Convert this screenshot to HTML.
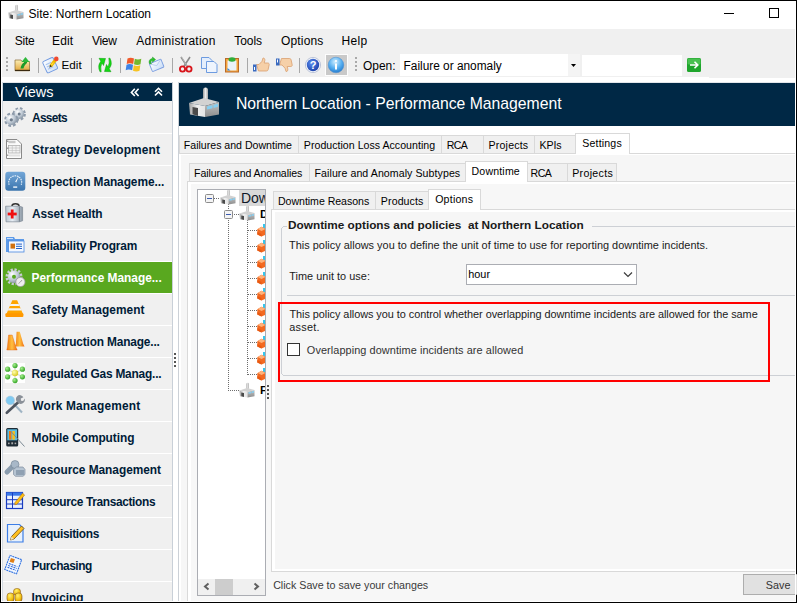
<!DOCTYPE html>
<html><head><meta charset="utf-8">
<style>
*{margin:0;padding:0;box-sizing:border-box}
html,body{width:797px;height:603px;overflow:hidden;background:#000}
body{position:relative;font-family:"Liberation Sans",sans-serif;color:#000}
.a{position:absolute}
.t{position:absolute;white-space:pre;line-height:1}
svg{position:absolute;overflow:visible}
</style></head><body>
<svg width="0" height="0" style="position:absolute;left:0;top:0">
<defs>
<linearGradient id="gch" x1="0" x2="1" y1="0" y2="0"><stop offset="0" stop-color="#9a9a9a"/><stop offset=".5" stop-color="#ececec"/><stop offset="1" stop-color="#a8a8a8"/></linearGradient>
<linearGradient id="glf" x1="0" x2="1" y1="0" y2="0"><stop offset="0" stop-color="#a4a4a4"/><stop offset=".5" stop-color="#eeeeee"/><stop offset="1" stop-color="#e4e4e4"/></linearGradient>
<linearGradient id="grf" x1="0" x2="0" y1="0" y2="1"><stop offset="0" stop-color="#c2c2c2"/><stop offset="1" stop-color="#8e8e8e"/></linearGradient>
<symbol id="fac" viewBox="0 0 32 32">
<rect x="15" y="1.5" width="5" height="13" rx="2.5" fill="url(#gch)"/>
<polygon points="1,17 16,12 31,16 17,20" fill="#d2d2d2"/>
<polygon points="1,17 17,20 17,31 2,28.5" fill="url(#glf)"/>
<polygon points="17,20 31,16 31,28.5 17,31" fill="url(#grf)"/>
<polygon points="4.5,21 10,22 10,30 4.5,28.3" fill="#4a4a4a"/>
<polygon points="19,20.5 24.5,19.3 24.5,22.3 19,23.5" fill="#86cff2"/>
<polygon points="25.5,19 30,17.8 30,20.8 25.5,22" fill="#86cff2"/>
</symbol>
<symbol id="cube" viewBox="0 0 16 16">
<rect x="12" y="0" width="3" height="6" fill="#2ec8f0"/>
<polygon points="8,2.5 14,5.5 14,11.5 8,14.5 2,11.5 2,5.5" fill="#f46a1f"/>
<polygon points="8,2.5 14,5.5 8,8.5 2,5.5" fill="#ffa66a"/>
<polygon points="8,8.5 14,5.5 14,11.5 8,14.5" fill="#e5581a"/>
</symbol>
<pattern id="dotv" width="1" height="2" patternUnits="userSpaceOnUse"><rect width="1" height="1" fill="#6d6d6d"/></pattern>
<pattern id="doth" width="2" height="1" patternUnits="userSpaceOnUse"><rect width="1" height="1" fill="#6d6d6d"/></pattern>
</defs></svg>

<div class="a" style="left:1px;top:1px;width:795px;height:601px;background:#fff;"></div>
<svg style="left:8px;top:4px" width="16" height="16"><use href="#fac" x="0" y="0" width="16" height="16"/></svg>

<div class="t" style="left:28.52px;top:8px;font-size:12.00px;letter-spacing:-0.011px;">Site: Northern Location</div>
<div class="a" style="left:724px;top:13px;width:10px;height:1px;background:#000;"></div>
<div class="a" style="left:769px;top:8px;width:10px;height:10px;border:1px solid #000"></div>
<div class="a" style="left:2px;top:29px;width:793px;height:48px;background:#f0f0f0;"></div>
<div class="a" style="left:709px;top:77px;width:86px;height:1px;background:#f0f0f0;"></div>
<div class="t" style="left:14.82px;top:35px;font-size:12.00px;letter-spacing:-0.293px;">Site</div>
<div class="t" style="left:52.04px;top:35px;font-size:12.00px;letter-spacing:0.107px;">Edit</div>
<div class="t" style="left:92.00px;top:35px;font-size:12.00px;letter-spacing:-0.307px;">View</div>
<div class="t" style="left:136.30px;top:35px;font-size:12.00px;letter-spacing:0.234px;">Administration</div>
<div class="t" style="left:234.26px;top:35px;font-size:12.00px;letter-spacing:-0.040px;">Tools</div>
<div class="t" style="left:281.02px;top:35px;font-size:12.00px;letter-spacing:0.157px;">Options</div>
<div class="t" style="left:341.44px;top:35px;font-size:12.00px;letter-spacing:0.373px;">Help</div>
<svg style="left:0;top:0" width="797" height="603">
<defs>
<linearGradient id="gfold" x1="0" x2="0" y1="0" y2="1"><stop offset="0" stop-color="#fbeeb5"/><stop offset="1" stop-color="#e3a63a"/></linearGradient>
<linearGradient id="ggreen" x1="0" x2="1" y1="0" y2="1"><stop offset="0" stop-color="#58d858"/><stop offset="1" stop-color="#0f8f1f"/></linearGradient>
<radialGradient id="gblue" cx=".4" cy=".35" r=".7"><stop offset="0" stop-color="#5a8ef0"/><stop offset="1" stop-color="#1a3fa8"/></radialGradient>
<radialGradient id="ginfo" cx=".45" cy=".3" r=".75"><stop offset="0" stop-color="#cfeeff"/><stop offset=".55" stop-color="#55aef0"/><stop offset="1" stop-color="#1f74c8"/></radialGradient>
<linearGradient id="gdoc" x1="0" x2="1" y1="0" y2="1"><stop offset="0" stop-color="#ffffff"/><stop offset="1" stop-color="#c8dcf6"/></linearGradient>
</defs>
<!-- grips -->
<rect x="6" y="57" width="2" height="2" fill="#a9a9a9"/><rect x="6" y="61" width="2" height="2" fill="#a9a9a9"/><rect x="6" y="65" width="2" height="2" fill="#a9a9a9"/><rect x="6" y="69" width="2" height="2" fill="#a9a9a9"/>
<rect x="355" y="57" width="2" height="2" fill="#a9a9a9"/><rect x="355" y="61" width="2" height="2" fill="#a9a9a9"/><rect x="355" y="65" width="2" height="2" fill="#a9a9a9"/><rect x="355" y="69" width="2" height="2" fill="#a9a9a9"/>
<!-- separators -->
<rect x="38" y="58" width="1" height="15" fill="#a8a8a8"/>
<rect x="91" y="58" width="1" height="15" fill="#a8a8a8"/>
<rect x="120" y="58" width="1" height="15" fill="#a8a8a8"/>
<rect x="172" y="58" width="1" height="15" fill="#a8a8a8"/>
<rect x="247" y="58" width="1" height="15" fill="#a8a8a8"/>
<rect x="299" y="58" width="1" height="15" fill="#a8a8a8"/>
<!-- folder up -->
<path d="M15,60 h6 l1,1.5 h7.5 v9.3 h-14.5z" fill="url(#gfold)" stroke="#8a6a30" stroke-width=".7"/>
<rect x="15" y="69.8" width="15" height="1.2" fill="#3a2a10"/>
<path d="M20.5,68.5 C21,65 22.5,63.2 24,62.5 L24,61.5 L27,61.5 L27,63 C25.5,64 24,66 23.5,68.5z" fill="#1d9a2a"/>
<path d="M25.5,57 L29.5,62 L21.5,62z" fill="#2db83a"/>
<!-- edit doc -->
<g transform="rotate(-25 50 65)"><rect x="44.3" y="59" width="11.5" height="12.5" rx="1.5" fill="url(#gdoc)" stroke="#6f98e0" stroke-width=".9"/>
<rect x="46.3" y="62.5" width="6" height="1" fill="#a8c4ee"/><rect x="46.3" y="65" width="7" height="1" fill="#a8c4ee"/><rect x="46.3" y="67.5" width="6" height="1" fill="#a8c4ee"/></g>
<path d="M50.6,66.2 L55.8,59.6" stroke="#f0b800" stroke-width="3.2" stroke-linecap="butt"/>
<path d="M50.6,66.2 L53.5,62.5" stroke="#ffe040" stroke-width="1.2"/>
<path d="M49.3,67.7 L50.2,64.8 L52,66.3z" fill="#3a3020"/>
<circle cx="56.3" cy="58.9" r="2.3" fill="#f04a30"/>
<!-- refresh -->
<path d="M99,58.3 L105.5,58.5 L103.5,65.5 L102.2,63 Q100,66.5 101.2,71.8 L100,71.8 Q97,66 100.8,61.3z" fill="#14d814" stroke="#0a9a0a" stroke-width=".5"/>
<path d="M111,71.7 L104.5,71.5 L106.5,64.5 L107.8,67 Q110,63.5 108.8,58.2 L110,58.2 Q113,64 109.2,68.7z" fill="#14d814" stroke="#0a9a0a" stroke-width=".5"/>
<!-- windows logo -->
<path d="M127.5,58.5 q3,-1.5 6.5,0 l-0.8,5.5 q-3.5,-1.5 -6.5,0z" fill="#f0592a"/>
<path d="M134.8,58.8 q3,1.5 6.5,0 l-0.8,5.5 q-3,1.5 -6.5,0z" fill="#74b82e"/>
<path d="M126.5,64.8 q3,-1.5 6.5,0 l-0.8,5.5 q-3.5,-1.5 -6.5,0z" fill="#3d83e6"/>
<path d="M133.8,65.2 q3,1.5 6.5,0 l-0.8,5.5 q-3,1.5 -6.5,0z" fill="#f6c324"/>
<!-- envelope -->
<g transform="rotate(-22 157 65.5)"><rect x="150.5" y="61" width="12.5" height="8.5" rx=".8" fill="url(#gdoc)" stroke="#7d9fe0" stroke-width=".9"/><path d="M151,61.5 L156.7,65.5 L162.5,61.5" fill="none" stroke="#b0c6ea" stroke-width=".7"/></g>
<path d="M149.5,63.8 A3.6,3.6 0 0 1 152.5,58.4 L152.5,57 L155.6,59.6 L152.5,62.2 L152.5,60.6 A1.8,1.8 0 0 0 151.5,63.8z" fill="#2cc02c" stroke="#12901a" stroke-width=".4"/>
<!-- scissors -->
<path d="M181,57 L187.5,67 M190,57 L183.5,67" stroke="#8a8a8a" stroke-width="1.6" fill="none"/>
<path d="M181.5,57 L187,66" stroke="#d0d0d0" stroke-width=".6" fill="none"/>
<circle cx="182.5" cy="69" r="2.6" fill="none" stroke="#d8141a" stroke-width="1.8"/>
<circle cx="189" cy="69" r="2.6" fill="none" stroke="#d8141a" stroke-width="1.8"/>
<!-- copy -->
<path d="M201.5,57.5 h7.5 l3,3 v8 h-10.5z" fill="#e4eefc" stroke="#6d9be0" stroke-width="1"/>
<path d="M206.5,61.5 h7.5 l3,3 v8 h-10.5z" fill="#eef4fd" stroke="#6d9be0" stroke-width="1"/>
<!-- paste -->
<rect x="225.5" y="58.5" width="13" height="13.5" fill="#f5a43c" stroke="#b86a2a" stroke-width="1"/>
<rect x="227.5" y="60.5" width="9" height="10" fill="#eaf3fb"/>
<path d="M227.5,68 l3,2.5 h-3z" fill="#3a86d8"/>
<ellipse cx="232" cy="59.5" rx="3.5" ry="2.2" fill="#2fae3a"/>
<!-- thumbs up -->
<path d="M256.5,64.5 h2.5 l3,-3.2 l1,-3.3 c1.6,0 2,1 1.8,2.6 l-0.6,2.4 h3.6 c1,0 1.6,.8 1.4,1.7 l-1.1,5 c-.2,.8 -.8,1.3 -1.6,1.3 h-8 z" fill="#f6d0a8" stroke="#d9a070" stroke-width=".8"/>
<rect x="253" y="64.5" width="3.5" height="7" fill="#3b6bc0"/><rect x="254" y="67" width="1" height="3" fill="#fff"/>
<!-- thumbs down -->
<path d="M279.5,65 h2.5 l3,3.2 l1,3.3 c1.6,0 2,-1 1.8,-2.6 l-.6,-2.4 h3.6 c1,0 1.6,-.8 1.4,-1.7 l-1.1,-5 c-.2,-.8 -.8,-1.3 -1.6,-1.3 h-8 z" fill="#f6d0a8" stroke="#d9a070" stroke-width=".8"/>
<rect x="276" y="58.5" width="3.5" height="7" fill="#3b6bc0"/><rect x="277" y="59.5" width="1" height="3" fill="#fff"/>
<!-- help -->
<circle cx="313" cy="65" r="7.6" fill="#f4f6fb" stroke="#9aa8c8" stroke-width=".6"/>
<circle cx="313" cy="65" r="6.2" fill="url(#gblue)"/>
<text x="313" y="69.3" font-family="Liberation Sans" font-weight="700" font-size="11" fill="#fff" text-anchor="middle">?</text>
<!-- info highlighted button -->
<rect x="325" y="54" width="23" height="22" fill="#fdfdfd"/>
<rect x="326" y="55" width="21" height="20" fill="#c9c9c9"/>
<circle cx="336" cy="65" r="7.8" fill="url(#ginfo)" stroke="#4d8fd0" stroke-width=".5"/>
<rect x="335" y="63.5" width="2" height="6" fill="#fff"/><circle cx="336" cy="61" r="1.1" fill="#fff"/>
</svg>

<div class="t" style="left:61.57px;top:59px;font-size:11.65px;">Edit</div>
<div class="t" style="left:363.02px;top:61px;font-size:11.96px;">Open:</div>
<div class="a" style="left:400px;top:54px;width:180px;height:22px;background:#fff;"></div>
<div class="a" style="left:568px;top:54px;width:12px;height:22px;background:#f4f4f4;"></div>
<div class="t" style="left:403.55px;top:61px;font-size:11.87px;">Failure or anomaly</div>
<div class="a" style="left:582px;top:55px;width:100px;height:21px;background:#fff;"></div>
<svg style="left:0;top:0" width="797" height="603">
<!-- combo arrow -->
<path d="M571,64 h5 l-2.5,3z" fill="#000"/>
<!-- go button -->
<rect x="687" y="58" width="14" height="14" rx="1.5" fill="#1fa52c"/>
<rect x="687.5" y="58.5" width="13" height="6" rx="1" fill="#48c050"/>
<path d="M690,65 h7 M694.5,61.8 L697.8,65 L694.5,68.2" stroke="#fff" stroke-width="1.6" fill="none"/>

</svg>

<div class="a" style="left:2px;top:83px;width:170px;height:518px;background:#f0f0f0;"></div>
<div class="a" style="left:2px;top:82px;width:171px;height:1px;background:#e2e6ea;"></div>
<div class="a" style="left:2px;top:82px;width:1px;height:519px;background:#d4dbe2;"></div>
<div class="a" style="left:172px;top:82px;width:1px;height:519px;background:#c9d0d8;"></div>
<div class="a" style="left:3px;top:83px;width:169px;height:18px;background:#002845;"></div>
<div class="t" style="left:15.00px;top:85px;font-size:14.50px;color:#fff;">Views</div>
<svg style="left:0;top:0" width="797" height="603">
<g fill="none" stroke="#fff" stroke-width="1.6">
<polyline points="134.8,88.8 131.4,92.4 134.8,96"/>
<polyline points="138.6,88.8 135.2,92.4 138.6,96"/>
<polyline points="155,91.8 158.5,88.3 162,91.8"/>
<polyline points="155,95.5 158.5,92 162,95.5"/>
</g></svg>

<div class="t" style="left:32.06px;top:113px;font-size:11.90px;letter-spacing:-0.704px;font-weight:700;color:#001c38;">Assets</div>
<div class="a" style="left:3px;top:133px;width:169px;height:1px;background:#fff;"></div>
<div class="t" style="left:32.06px;top:145px;font-size:11.90px;letter-spacing:0.120px;font-weight:700;color:#001c38;">Strategy Development</div>
<div class="a" style="left:3px;top:165px;width:169px;height:1px;background:#fff;"></div>
<div class="t" style="left:31.59px;top:177px;font-size:11.90px;letter-spacing:-0.072px;font-weight:700;color:#001c38;">Inspection Manageme...</div>
<div class="a" style="left:3px;top:197px;width:169px;height:1px;background:#fff;"></div>
<div class="t" style="left:32.06px;top:209px;font-size:11.90px;letter-spacing:-0.133px;font-weight:700;color:#001c38;">Asset Health</div>
<div class="a" style="left:3px;top:229px;width:169px;height:1px;background:#fff;"></div>
<div class="t" style="left:31.59px;top:241px;font-size:11.90px;letter-spacing:-0.144px;font-weight:700;color:#001c38;">Reliability Program</div>
<div class="a" style="left:3px;top:261px;width:169px;height:1px;background:#fff;"></div>
<div class="a" style="left:3px;top:262px;width:169px;height:31px;background:#59a81f;"></div>
<div class="t" style="left:31.59px;top:273px;font-size:11.90px;letter-spacing:-0.003px;font-weight:700;color:#fff;">Performance Manage...</div>
<div class="a" style="left:3px;top:293px;width:169px;height:1px;background:#fff;"></div>
<div class="t" style="left:32.06px;top:305px;font-size:11.90px;letter-spacing:0.045px;font-weight:700;color:#001c38;">Safety Management</div>
<div class="a" style="left:3px;top:325px;width:169px;height:1px;background:#fff;"></div>
<div class="t" style="left:31.82px;top:337px;font-size:11.90px;letter-spacing:-0.163px;font-weight:700;color:#001c38;">Construction Manage...</div>
<div class="a" style="left:3px;top:357px;width:169px;height:1px;background:#fff;"></div>
<div class="t" style="left:31.59px;top:369px;font-size:11.90px;letter-spacing:-0.195px;font-weight:700;color:#001c38;">Regulated Gas Manag...</div>
<div class="a" style="left:3px;top:389px;width:169px;height:1px;background:#fff;"></div>
<div class="t" style="left:32.30px;top:401px;font-size:11.90px;letter-spacing:0.169px;font-weight:700;color:#001c38;">Work Management</div>
<div class="a" style="left:3px;top:421px;width:169px;height:1px;background:#fff;"></div>
<div class="t" style="left:31.59px;top:433px;font-size:11.90px;letter-spacing:-0.056px;font-weight:700;color:#001c38;">Mobile Computing</div>
<div class="a" style="left:3px;top:453px;width:169px;height:1px;background:#fff;"></div>
<div class="t" style="left:31.59px;top:465px;font-size:11.90px;letter-spacing:-0.043px;font-weight:700;color:#001c38;">Resource Management</div>
<div class="a" style="left:3px;top:485px;width:169px;height:1px;background:#fff;"></div>
<div class="t" style="left:31.59px;top:497px;font-size:11.90px;letter-spacing:-0.346px;font-weight:700;color:#001c38;">Resource Transactions</div>
<div class="a" style="left:3px;top:517px;width:169px;height:1px;background:#fff;"></div>
<div class="t" style="left:31.59px;top:529px;font-size:11.90px;letter-spacing:-0.328px;font-weight:700;color:#001c38;">Requisitions</div>
<div class="a" style="left:3px;top:549px;width:169px;height:1px;background:#fff;"></div>
<div class="t" style="left:31.59px;top:561px;font-size:11.90px;letter-spacing:-0.456px;font-weight:700;color:#001c38;">Purchasing</div>
<div class="a" style="left:3px;top:581px;width:169px;height:1px;background:#fff;"></div>
<div class="t" style="left:31.59px;top:593px;font-size:11.90px;letter-spacing:-0.037px;font-weight:700;color:#001c38;">Invoicing</div>
<svg style="left:0;top:0" width="797" height="603">
<defs>
<radialGradient id="lgear" cx=".35" cy=".3" r=".8"><stop offset="0" stop-color="#ffffff"/><stop offset=".6" stop-color="#b9c4d0"/><stop offset="1" stop-color="#7d8a99"/></radialGradient>
<linearGradient id="lblue" x1="0" x2="0" y1="0" y2="1"><stop offset="0" stop-color="#73a7d8"/><stop offset="1" stop-color="#3a74ad"/></linearGradient>
<linearGradient id="lsilver" x1="0" x2="1" y1="0" y2="0"><stop offset="0" stop-color="#b7c2cc"/><stop offset=".4" stop-color="#e7eef5"/><stop offset="1" stop-color="#8d99a5"/></linearGradient>
<linearGradient id="lorange" x1="0" x2="1" y1="0" y2="0"><stop offset="0" stop-color="#f07a10"/><stop offset=".5" stop-color="#ffc040"/><stop offset="1" stop-color="#f06a10"/></linearGradient>
<radialGradient id="lgreenb" cx=".35" cy=".35" r=".7"><stop offset="0" stop-color="#a8f090"/><stop offset="1" stop-color="#2ea020"/></radialGradient>
<radialGradient id="lyell" cx=".35" cy=".35" r=".7"><stop offset="0" stop-color="#ffffb0"/><stop offset="1" stop-color="#d8c820"/></radialGradient>
<radialGradient id="lcoin" cx=".4" cy=".3" r=".8"><stop offset="0" stop-color="#fff070"/><stop offset=".6" stop-color="#f2c010"/><stop offset="1" stop-color="#b07810"/></radialGradient>
</defs>
<!-- 0 Assets: gears -->
<g transform="translate(5,107)">
<circle cx="14.2" cy="7" r="5.6" fill="none" stroke="#8e9bab" stroke-width="2.2" stroke-dasharray="2.6 1.8"/>
<circle cx="14.2" cy="7" r="5" fill="url(#lgear)"/>
<circle cx="14.2" cy="7" r="1.5" fill="#6d7b8b"/>
<circle cx="6.3" cy="12.8" r="6" fill="none" stroke="#8e9bab" stroke-width="2.2" stroke-dasharray="2.8 1.9"/>
<circle cx="6.3" cy="12.8" r="5.3" fill="url(#lgear)"/>
<circle cx="6.3" cy="12.8" r="1.6" fill="#6d7b8b"/>
</g>
<!-- 1 Strategy: spreadsheet page -->
<g transform="translate(5,139)">
<path d="M1.5,0.5 h10.5 l4.5,4.5 v14.5 h-15z" fill="#fbfbfb" stroke="#8a8a8a" stroke-width="1"/>
<rect x="3.5" y="1.8" width="7" height="2.4" fill="#c8c8c8"/>
<rect x="3.5" y="6.5" width="11.5" height="7.5" fill="#f2f2f2" stroke="#a8a8a8" stroke-width=".7"/>
<path d="M7.3,6.5 v7.5 M11,6.5 v7.5 M3.5,9 h11.5 M3.5,11.5 h11.5" stroke="#bdbdbd" stroke-width=".6"/>
<rect x="4" y="15.5" width="11" height="2" fill="#e0e0e0"/>
<rect x="2.3" y="1.5" width="1" height="1.5" fill="#777"/><rect x="2.3" y="8.5" width="1" height="1.5" fill="#777"/><rect x="2.3" y="15.5" width="1" height="1.5" fill="#777"/>
</g>
<!-- 2 Inspection: gauge -->
<g transform="translate(5,171)">
<rect x="0.3" y="0.8" width="20" height="19" rx="3" fill="url(#lblue)"/>
<path d="M4.2,13.8 A6.5,6.5 0 1 1 16.2,13.8" fill="none" stroke="#e8f2fb" stroke-width="1.1" stroke-dasharray="1.6 .8"/>
<path d="M10.2,10.6 L14.2,4.6 L11.2,11.4z" fill="#fff"/>
<rect x="8.2" y="15.3" width="4" height="1.6" fill="#dce8f4"/>
</g>
<!-- 3 Asset Health: first aid -->
<g transform="translate(5,203)">
<path d="M7,3 q0,-2.3 3.5,-2.3 q3.5,0 3.5,2.3" fill="none" stroke="#333" stroke-width="1.6"/>
<path d="M0.6,3.2 h13.8 l3.2,1 v13.6 l-3.2,1 h-13.4z" fill="url(#lsilver)" stroke="#7f8a95" stroke-width=".7"/>
<path d="M14.4,3.2 v15.6" stroke="#7a8590" stroke-width="1"/>
<rect x="5.8" y="6.5" width="2.8" height="9" fill="#f01010"/>
<rect x="2.7" y="9.6" width="9" height="2.8" fill="#f01010"/>
</g>
<!-- 4 Reliability: folder with doc -->
<g transform="translate(5,235)">
<path d="M1,2 h8 l1,2 h9 v13 h-18z" fill="#5d9ae8"/>
<rect x="2" y="3" width="6" height="1" fill="#c8e0fb"/>
<rect x="3.5" y="6" width="15.5" height="11" fill="#f4f8ff" stroke="#4a88e0" stroke-width=".8"/>
<rect x="5.5" y="8.6" width="4.5" height="5" fill="#d07010"/>
<rect x="11" y="8.6" width="6" height="1" fill="#2a62c8"/><rect x="11" y="10.8" width="6" height="1.2" fill="#4a80d0"/><rect x="11" y="13" width="6" height="1" fill="#2a62c8"/>
</g>
<!-- 5 Performance: gear with clock -->
<g transform="translate(5,267)">
<circle cx="9" cy="9.8" r="7.2" fill="none" stroke="#c8ccd2" stroke-width="2.6" stroke-dasharray="2.2 1.6"/>
<circle cx="9" cy="9.8" r="6.3" fill="url(#lgear)"/>
<circle cx="9" cy="9.8" r="2" fill="#59a81f"/>
<circle cx="15.4" cy="15" r="4.6" fill="#eeeeee" stroke="#9a9a9a" stroke-width=".8"/>
<path d="M13.5,16.5 L15.4,15 L17,13" stroke="#808080" stroke-width=".7" fill="none"/>
</g>
<!-- 6 Safety: cone -->
<g transform="translate(5,299)">
<path d="M7.3,1.3 h4.8 l6,14 h-16.8z" fill="#ffa500"/>
<path d="M5.5,5 h8.2 l.9,2 h-10z" fill="#f4f4f4"/>
<path d="M3.7,9.3 h12 l.9,2.2 h-13.8z" fill="#f4f4f4"/>
<rect x="0.4" y="14.3" width="18" height="3.6" rx="1" fill="#ff9800"/>
</g>
<!-- 7 Construction: two cones -->
<g transform="translate(5,331)">
<path d="M11.6,0.8 h3.2 l3.4,12 l1.3,2.6 h-9.6 l1,-2.6z" fill="url(#lorange)"/>
<path d="M3.6,4 h3.6 l3.6,12 l1.4,3 h-10.4 l.6,-3z" fill="url(#lorange)" stroke="#e06010" stroke-width=".4"/>
</g>
<!-- 8 Regulated gas: molecule -->
<g transform="translate(5,363)">
<rect x="0" y="0" width="20" height="20" fill="#ffffff"/>
<path d="M10,2.5 V17.5 M2.3,6.2 L17.5,13.8 M2.3,13.8 L17.5,6.2" stroke="#d8d8d8" stroke-width="1.2"/>
<circle cx="10" cy="10" r="3.2" fill="url(#lyell)"/>
<circle cx="10" cy="2.6" r="2.6" fill="url(#lgreenb)"/><circle cx="10" cy="17.6" r="2.6" fill="url(#lgreenb)"/>
<circle cx="2.6" cy="6.2" r="2.6" fill="url(#lgreenb)"/><circle cx="17.4" cy="6.2" r="2.6" fill="url(#lgreenb)"/>
<circle cx="2.6" cy="13.8" r="2.6" fill="url(#lgreenb)"/><circle cx="17.4" cy="13.8" r="2.6" fill="url(#lgreenb)"/>
</g>
<!-- 9 Work: magnifier + wrench -->
<g transform="translate(5,395)">
<path d="M8,8 L17,17.5" stroke="#9fb4c4" stroke-width="2"/>
<circle cx="5.2" cy="5.4" r="4.3" fill="#7fcaf2" stroke="#b0c8d8" stroke-width=".6"/>
<path d="M1.8,17.8 L14,6.5" stroke="#4e5560" stroke-width="2.6" stroke-linecap="round"/>
<path d="M12.8,7.5 A4,4 0 1 1 18.4,2.2 L15.8,3.6 L16,5.8 L18.2,6 L19.6,3.6 A4,4 0 0 1 12.8,7.5z" fill="#8a9098"/>
</g>
<!-- 10 Mobile: device -->
<g transform="translate(5,427)">
<rect x="1.2" y="1" width="12" height="18.5" rx="1.5" fill="#1e2b35"/>
<rect x="2.3" y="2.3" width="9.8" height="11" fill="#5bbde0"/>
<rect x="4" y="4" width="2.4" height="8.6" fill="#f07810"/><rect x="7.4" y="4" width="2.4" height="8.6" fill="#ffc010"/>
<rect x="3" y="15.6" width="1.6" height="1.6" fill="#aaa"/><rect x="6.3" y="15.3" width="1.8" height="2" fill="#aaa"/><rect x="9.6" y="15.6" width="1.6" height="1.6" fill="#aaa"/>
<path d="M5.5,4 L19.5,19.5" stroke="#7c8a94" stroke-width="1"/>
</g>
<!-- 11 Resource mgmt: bolt & nut -->
<g transform="translate(5,459)">
<path d="M2,13 L9.5,5.5" stroke="#8a9cae" stroke-width="5" stroke-linecap="round"/>
<circle cx="10" cy="5.5" r="4" fill="#a8b8c8" stroke="#6f8090" stroke-width=".6"/>
<path d="M8.5,10.5 l3,-2.5 h6.5 l2,2.5 v5 l-2,1.8 h-7.5 l-2,-1.8z" fill="#b6c4d2" stroke="#728294" stroke-width=".6"/>
<rect x="11" y="11" width="8" height="5" fill="#8fa0b2"/>
</g>
<!-- 12 Resource transactions: table + pencil -->
<g transform="translate(5,491)">
<rect x="1.5" y="1.5" width="16" height="16" fill="#e8f0ff" stroke="#1a3cc0" stroke-width="1.2"/>
<rect x="1.5" y="1.5" width="16" height="3.2" fill="#3a78e8"/>
<path d="M1.5,8.7 h16 M1.5,13 h16 M7.5,1.5 v16" stroke="#1a3cc0" stroke-width="1"/>
<path d="M10,11.5 L17.6,2.3 L19.6,4 L12,13.2 L9.8,13.8z" fill="#ffc010" stroke="#b07010" stroke-width=".6"/>
</g>
<!-- 13 Requisitions: doc + pencil -->
<g transform="translate(5,523)">
<path d="M2.5,1.5 h12 l3.5,3.5 v14 h-15.5z" fill="#e8f1fc" stroke="#3d7ee6" stroke-width="1.2"/>
<path d="M5.5,17 L6.5,13.5 L16.5,3 L19,5.5 L9,16z" fill="#ffc020" stroke="#6a4a10" stroke-width=".8"/>
<path d="M5.5,17 L6.5,13.5 L9,16z" fill="#f0e0c0"/>
</g>
<!-- 14 Purchasing: tilted doc -->
<g transform="translate(5,555) rotate(20 8 9.5)">
<rect x="2" y="2" width="12.5" height="15" fill="#f2f8ff" stroke="#2f70e0" stroke-width="1.1" stroke-dasharray="2 .6"/>
<rect x="3.8" y="4" width="4.2" height="4" fill="#e08018"/>
<path d="M3.8,10 h9 M3.8,12 h9 M3.8,14 h9" stroke="#2a64d8" stroke-width="1" stroke-dasharray="2 .8"/>
</g>
<!-- 15 Invoicing: coins -->
<g transform="translate(5,587)">
<rect x="8.5" y="1.5" width="7" height="7" rx="3" fill="url(#lcoin)" stroke="#8a5a20" stroke-width=".6"/>
<rect x="2" y="6" width="7" height="9" rx="3" fill="url(#lcoin)" stroke="#8a5a20" stroke-width=".6"/>
<rect x="10" y="6" width="7" height="9" rx="3" fill="url(#lcoin)" stroke="#8a5a20" stroke-width=".6"/>
</g>
</svg>

<div class="a" style="left:174px;top:353px;width:2px;height:2px;background:#555;"></div>
<div class="a" style="left:174px;top:357px;width:2px;height:2px;background:#555;"></div>
<div class="a" style="left:174px;top:361px;width:2px;height:2px;background:#555;"></div>
<div class="a" style="left:174px;top:365px;width:2px;height:2px;background:#555;"></div>
<div class="a" style="left:178px;top:82px;width:617px;height:1px;background:#e2e6ea;"></div>
<div class="a" style="left:178px;top:82px;width:1px;height:519px;background:#ccd1d7;"></div>
<div class="a" style="left:179px;top:83px;width:616px;height:43px;background:#002845;"></div>
<svg style="left:188px;top:86px" width="32" height="32"><use href="#fac" x="0" y="0" width="32" height="32"/></svg>

<div class="t" style="left:235.94px;top:96px;font-size:15.76px;color:#fff;">Northern Location - Performance Management</div>
<div class="a" style="left:179px;top:154px;width:616px;height:447px;background:#f6f6f6;"></div>
<div class="a" style="left:179px;top:154px;width:616px;height:1px;background:#fff;"></div>
<div class="a" style="left:179px;top:154px;width:2px;height:447px;background:#fff;"></div>
<div class="a" style="left:179px;top:153px;width:616px;height:1px;background:#d9d9d9;"></div>
<div class="a" style="left:179px;top:135px;width:120px;height:19px;background:#f0f0f0;border:1px solid #d9d9d9"></div>
<div class="t" style="left:183.85px;top:140px;font-size:10.60px;letter-spacing:-0.013px;">Failures and Downtime</div>
<div class="a" style="left:298px;top:135px;width:144px;height:19px;background:#f0f0f0;border:1px solid #d9d9d9"></div>
<div class="t" style="left:303.85px;top:140px;font-size:10.60px;letter-spacing:0.019px;">Production Loss Accounting</div>
<div class="a" style="left:441px;top:135px;width:43px;height:19px;background:#f0f0f0;border:1px solid #d9d9d9"></div>
<div class="t" style="left:446.65px;top:140px;font-size:10.60px;letter-spacing:-0.562px;">RCA</div>
<div class="a" style="left:483px;top:135px;width:52px;height:19px;background:#f0f0f0;border:1px solid #d9d9d9"></div>
<div class="t" style="left:488.55px;top:140px;font-size:10.60px;letter-spacing:0.186px;">Projects</div>
<div class="a" style="left:534px;top:135px;width:42px;height:19px;background:#f0f0f0;border:1px solid #d9d9d9"></div>
<div class="t" style="left:539.55px;top:140px;font-size:10.60px;letter-spacing:-0.133px;">KPIs</div>
<div class="a" style="left:575px;top:133px;width:55px;height:21px;background:#fff;border:1px solid #d9d9d9;border-bottom:none"></div>
<div class="t" style="left:582.28px;top:138px;font-size:10.60px;letter-spacing:0.168px;">Settings</div>
<div class="a" style="left:187px;top:181px;width:608px;height:420px;background:#f7f7f7;border-left:1px solid #d9d9d9"></div>
<div class="a" style="left:188px;top:182px;width:607px;height:2px;background:#fff;"></div>
<div class="a" style="left:188px;top:182px;width:3px;height:419px;background:#fff;"></div>
<div class="a" style="left:187px;top:181px;width:608px;height:1px;background:#d9d9d9;"></div>
<div class="a" style="left:189px;top:163px;width:121px;height:19px;background:#f0f0f0;border:1px solid #d9d9d9"></div>
<div class="t" style="left:194.05px;top:168px;font-size:10.60px;letter-spacing:-0.089px;">Failures and Anomalies</div>
<div class="a" style="left:309px;top:163px;width:157px;height:19px;background:#f0f0f0;border:1px solid #d9d9d9"></div>
<div class="t" style="left:314.55px;top:168px;font-size:10.60px;letter-spacing:0.071px;">Failure and Anomaly Subtypes</div>
<div class="a" style="left:465px;top:161px;width:63px;height:21px;background:#fff;border:1px solid #d9d9d9;border-bottom:none"></div>
<div class="t" style="left:471.55px;top:166px;font-size:10.60px;letter-spacing:0.158px;">Downtime</div>
<div class="a" style="left:527px;top:163px;width:41px;height:19px;background:#f0f0f0;border:1px solid #d9d9d9"></div>
<div class="t" style="left:530.55px;top:168px;font-size:10.60px;letter-spacing:-0.512px;">RCA</div>
<div class="a" style="left:567px;top:163px;width:50px;height:19px;background:#f0f0f0;border:1px solid #d9d9d9"></div>
<div class="t" style="left:572.15px;top:168px;font-size:10.60px;letter-spacing:0.343px;">Projects</div>
<div class="a" style="left:197px;top:189px;width:69px;height:407px;background:#fff;border:1px solid #abadb3"></div>
<svg style="left:0;top:0" width="797" height="603"><defs><clipPath id="tclip"><rect x="198" y="190" width="67" height="389"/></clipPath></defs><g clip-path="url(#tclip)"><rect x="228" y="203" width="1" height="188" fill="url(#dotv)"/><rect x="247" y="219" width="1" height="156" fill="url(#dotv)"/><rect x="214" y="198" width="6" height="1" fill="url(#doth)"/><rect x="234" y="214" width="5" height="1" fill="url(#doth)"/><rect x="248" y="230" width="10" height="1" fill="url(#doth)"/><rect x="248" y="246" width="10" height="1" fill="url(#doth)"/><rect x="248" y="262" width="10" height="1" fill="url(#doth)"/><rect x="248" y="278" width="10" height="1" fill="url(#doth)"/><rect x="248" y="294" width="10" height="1" fill="url(#doth)"/><rect x="248" y="310" width="10" height="1" fill="url(#doth)"/><rect x="248" y="326" width="10" height="1" fill="url(#doth)"/><rect x="248" y="342" width="10" height="1" fill="url(#doth)"/><rect x="248" y="358" width="10" height="1" fill="url(#doth)"/><rect x="248" y="374" width="10" height="1" fill="url(#doth)"/><rect x="228" y="390" width="11" height="1" fill="url(#doth)"/><rect x="239" y="190" width="27" height="16" fill="#d9d9d9"/><use href="#fac" x="220" y="189" width="16" height="16"/><use href="#fac" x="239" y="205" width="16" height="16"/><use href="#fac" x="239" y="382" width="16" height="16"/><rect x="263" y="224.0" width="3" height="6" fill="#35c6ee"/><polygon points="261.5,226.7 266.5,229.2 266.5,234.5 261.5,236.5 257.3,234.5 257.3,229.2" fill="#f36a22"/><polygon points="261.5,226.7 265.5,228.9 261.5,231.0 257.8,228.9" fill="#ffb27a"/><polygon points="257.3,232.0 261.5,234.0 261.5,236.5 257.3,234.5" fill="#e85a12"/><rect x="263" y="240.0" width="3" height="6" fill="#35c6ee"/><polygon points="261.5,242.7 266.5,245.2 266.5,250.5 261.5,252.5 257.3,250.5 257.3,245.2" fill="#f36a22"/><polygon points="261.5,242.7 265.5,244.9 261.5,247.0 257.8,244.9" fill="#ffb27a"/><polygon points="257.3,248.0 261.5,250.0 261.5,252.5 257.3,250.5" fill="#e85a12"/><rect x="263" y="256.0" width="3" height="6" fill="#35c6ee"/><polygon points="261.5,258.7 266.5,261.2 266.5,266.5 261.5,268.5 257.3,266.5 257.3,261.2" fill="#f36a22"/><polygon points="261.5,258.7 265.5,260.9 261.5,263.0 257.8,260.9" fill="#ffb27a"/><polygon points="257.3,264.0 261.5,266.0 261.5,268.5 257.3,266.5" fill="#e85a12"/><rect x="263" y="272.0" width="3" height="6" fill="#35c6ee"/><polygon points="261.5,274.7 266.5,277.2 266.5,282.5 261.5,284.5 257.3,282.5 257.3,277.2" fill="#f36a22"/><polygon points="261.5,274.7 265.5,276.9 261.5,279.0 257.8,276.9" fill="#ffb27a"/><polygon points="257.3,280.0 261.5,282.0 261.5,284.5 257.3,282.5" fill="#e85a12"/><rect x="263" y="288.0" width="3" height="6" fill="#35c6ee"/><polygon points="261.5,290.7 266.5,293.2 266.5,298.5 261.5,300.5 257.3,298.5 257.3,293.2" fill="#f36a22"/><polygon points="261.5,290.7 265.5,292.9 261.5,295.0 257.8,292.9" fill="#ffb27a"/><polygon points="257.3,296.0 261.5,298.0 261.5,300.5 257.3,298.5" fill="#e85a12"/><rect x="263" y="304.0" width="3" height="6" fill="#35c6ee"/><polygon points="261.5,306.7 266.5,309.2 266.5,314.5 261.5,316.5 257.3,314.5 257.3,309.2" fill="#f36a22"/><polygon points="261.5,306.7 265.5,308.9 261.5,311.0 257.8,308.9" fill="#ffb27a"/><polygon points="257.3,312.0 261.5,314.0 261.5,316.5 257.3,314.5" fill="#e85a12"/><rect x="263" y="320.0" width="3" height="6" fill="#35c6ee"/><polygon points="261.5,322.7 266.5,325.2 266.5,330.5 261.5,332.5 257.3,330.5 257.3,325.2" fill="#f36a22"/><polygon points="261.5,322.7 265.5,324.9 261.5,327.0 257.8,324.9" fill="#ffb27a"/><polygon points="257.3,328.0 261.5,330.0 261.5,332.5 257.3,330.5" fill="#e85a12"/><rect x="263" y="336.0" width="3" height="6" fill="#35c6ee"/><polygon points="261.5,338.7 266.5,341.2 266.5,346.5 261.5,348.5 257.3,346.5 257.3,341.2" fill="#f36a22"/><polygon points="261.5,338.7 265.5,340.9 261.5,343.0 257.8,340.9" fill="#ffb27a"/><polygon points="257.3,344.0 261.5,346.0 261.5,348.5 257.3,346.5" fill="#e85a12"/><rect x="263" y="352.0" width="3" height="6" fill="#35c6ee"/><polygon points="261.5,354.7 266.5,357.2 266.5,362.5 261.5,364.5 257.3,362.5 257.3,357.2" fill="#f36a22"/><polygon points="261.5,354.7 265.5,356.9 261.5,359.0 257.8,356.9" fill="#ffb27a"/><polygon points="257.3,360.0 261.5,362.0 261.5,364.5 257.3,362.5" fill="#e85a12"/><rect x="263" y="368.0" width="3" height="6" fill="#35c6ee"/><polygon points="261.5,370.7 266.5,373.2 266.5,378.5 261.5,380.5 257.3,378.5 257.3,373.2" fill="#f36a22"/><polygon points="261.5,370.7 265.5,372.9 261.5,375.0 257.8,372.9" fill="#ffb27a"/><polygon points="257.3,376.0 261.5,378.0 261.5,380.5 257.3,378.5" fill="#e85a12"/><rect x="205.5" y="194.5" width="8" height="8" rx="1" fill="#f4f4f4" stroke="#8c8c8c"/><rect x="207" y="198" width="5" height="1" fill="#3b5bb0"/><rect x="224.5" y="210.5" width="8" height="8" rx="1" fill="#f4f4f4" stroke="#8c8c8c"/><rect x="226" y="214" width="5" height="1" fill="#3b5bb0"/></g></svg>
<div class="t" style="left:240.88px;top:191px;font-size:14.00px;color:#101828;width:24.12px;overflow:hidden;">Downtime</div>
<div class="t" style="left:260.11px;top:209px;font-size:11.50px;font-weight:700;width:4.89px;overflow:hidden;">Downtime</div>
<div class="t" style="left:260.01px;top:385px;font-size:11.50px;font-weight:700;width:4.99px;overflow:hidden;">Facility</div>
<div class="a" style="left:198px;top:579px;width:67px;height:16px;background:#f0f0f0;"></div>
<div class="a" style="left:215px;top:579px;width:18px;height:16px;background:#cdcdcd;"></div>
<svg style="left:0;top:0" width="797" height="603"><polyline points="208.5,583.5 205,586.5 208.5,589.5" fill="none" stroke="#606060" stroke-width="2"/><polyline points="254.5,583.5 258,586.5 254.5,589.5" fill="none" stroke="#606060" stroke-width="2"/></svg>
<div class="a" style="left:267px;top:385px;width:2px;height:2px;background:#555;"></div>
<div class="a" style="left:267px;top:389px;width:2px;height:2px;background:#555;"></div>
<div class="a" style="left:267px;top:393px;width:2px;height:2px;background:#555;"></div>
<div class="a" style="left:267px;top:397px;width:2px;height:2px;background:#555;"></div>
<div class="a" style="left:271px;top:209px;width:524px;height:363px;background:#f6f6f6;border-left:1px solid #d9d9d9;border-bottom:1px solid #d9d9d9"></div>
<div class="a" style="left:272px;top:210px;width:523px;height:2px;background:#fff;"></div>
<div class="a" style="left:272px;top:210px;width:3px;height:360px;background:#fff;"></div>
<div class="a" style="left:272px;top:569px;width:523px;height:2px;background:#fff;"></div>
<div class="a" style="left:271px;top:209px;width:524px;height:1px;background:#d9d9d9;"></div>
<div class="a" style="left:273px;top:191px;width:103px;height:19px;background:#f0f0f0;border:1px solid #d9d9d9"></div>
<div class="t" style="left:277.95px;top:196px;font-size:10.60px;letter-spacing:-0.036px;">Downtime Reasons</div>
<div class="a" style="left:375px;top:191px;width:54px;height:19px;background:#f0f0f0;border:1px solid #d9d9d9"></div>
<div class="t" style="left:380.85px;top:196px;font-size:10.60px;letter-spacing:0.099px;">Products</div>
<div class="a" style="left:428px;top:189px;width:53px;height:21px;background:#fff;border:1px solid #d9d9d9;border-bottom:none"></div>
<div class="t" style="left:435.18px;top:194px;font-size:10.60px;letter-spacing:0.212px;">Options</div>
<div class="a" style="left:281px;top:228px;width:1px;height:146px;background:#cdd0d5;"></div>
<div class="a" style="left:282px;top:227px;width:1px;height:1px;background:#cdd0d5;"></div>
<div class="a" style="left:282px;top:374px;width:1px;height:1px;background:#cdd0d5;"></div>
<div class="a" style="left:283px;top:226px;width:4px;height:1px;background:#cdd0d5;"></div>
<div class="a" style="left:592px;top:226px;width:203px;height:1px;background:#cdd0d5;"></div>
<div class="a" style="left:283px;top:375px;width:512px;height:1px;background:#cdd0d5;"></div>
<div class="t" style="left:288.09px;top:220px;font-size:11.80px;letter-spacing:-0.014px;font-weight:700;color:#1a1a1a;">Downtime options and policies  at Northern Location</div>
<div class="t" style="left:289.08px;top:240px;font-size:10.90px;letter-spacing:0.014px;color:#1a1a1a;">This policy allows you to define the unit of time to use for reporting downtime incidents.</div>
<div class="t" style="left:289.28px;top:271px;font-size:10.90px;letter-spacing:0.036px;color:#1a1a1a;">Time unit to use:</div>
<div class="a" style="left:466px;top:264px;width:171px;height:21px;background:#fff;border:1px solid #abadb3"></div>
<div class="t" style="left:468.15px;top:269px;font-size:10.90px;letter-spacing:0.051px;">hour</div>
<svg style="left:0;top:0" width="797" height="603"><polyline points="624,272.5 628,276.5 632,272.5" fill="none" stroke="#3c3c3c" stroke-width="1.2"/></svg>
<div class="a" style="left:287px;top:295px;width:508px;height:1px;background:#cdd0d5;"></div>
<div class="t" style="left:289.38px;top:309px;font-size:10.90px;letter-spacing:-0.040px;color:#1a1a1a;">This policy allows you to control whether overlapping downtime incidents are allowed for the same</div>
<div class="t" style="left:289.16px;top:322px;font-size:10.90px;letter-spacing:0.283px;color:#1a1a1a;">asset.</div>
<div class="a" style="left:287px;top:343px;width:13px;height:13px;background:#fff;border:1px solid #333"></div>
<div class="t" style="left:306.86px;top:345px;font-size:10.90px;letter-spacing:0.080px;color:#333;">Overlapping downtime incidents are allowed</div>
<div class="a" style="left:278px;top:302px;width:492px;height:80px;border:2px solid #f00"></div>
<div class="t" style="left:273.17px;top:580px;font-size:10.69px;color:#3a3a3a;">Click Save to save your changes</div>
<div class="a" style="left:743px;top:574px;width:60px;height:21px;background:#e1e1e1;border:1px solid #adadad"></div>
<div class="t" style="left:765.87px;top:580px;font-size:10.77px;color:#333;">Save</div>
<div class="a" style="left:795px;top:29px;width:1px;height:573px;background:#fff;"></div>
<div class="a" style="left:1px;top:601px;width:795px;height:1px;background:#fff;"></div>
</body></html>
